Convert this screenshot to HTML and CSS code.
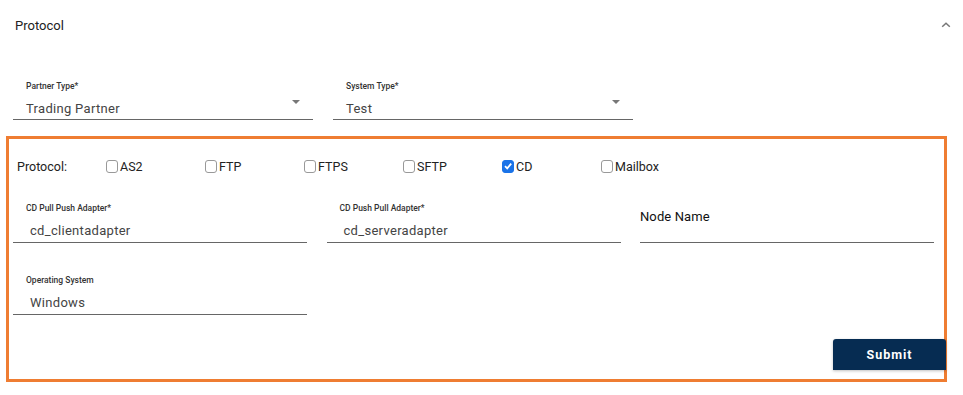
FILE: index.html
```html
<!DOCTYPE html>
<html>
<head>
<meta charset="utf-8">
<link rel="stylesheet" href="styles.css">
</head>
<body>
<div class="page">
  <div class="header">
    <span class="title">Protocol</span>
    <svg class="chevron" width="10" height="7" viewBox="0 0 10 7"><path d="M1.2 5.8 L5 2.2 L8.8 5.8" fill="none" stroke="#777" stroke-width="1.5"/></svg>
  </div>
  <div class="top-row">
    <div class="field select">
      <div class="label">Partner Type*</div>
      <div class="value">Trading Partner</div>
      <span class="caret"></span>
    </div>
    <div class="field select">
      <div class="label">System Type*</div>
      <div class="value">Test</div>
      <span class="caret"></span>
    </div>
  </div>
  <div class="box">
    <div class="proto-row">
      <span class="proto-label">Protocol:</span>
      <label class="cb"><span class="check"></span>AS2</label>
      <label class="cb"><span class="check"></span>FTP</label>
      <label class="cb"><span class="check"></span>FTPS</label>
      <label class="cb"><span class="check"></span>SFTP</label>
      <label class="cb"><span class="check on"><svg width="10" height="10" viewBox="0 0 10 10"><path d="M2 5.2 L4.2 7.4 L8.2 2.6" fill="none" stroke="#fff" stroke-width="1.8"/></svg></span>CD</label>
      <label class="cb"><span class="check"></span>Mailbox</label>
    </div>
    <div class="grid">
      <div class="field inbox">
        <div class="label">CD Pull Push Adapter*</div>
        <div class="value">cd_clientadapter</div>
      </div>
      <div class="field inbox">
        <div class="label">CD Push Pull Adapter*</div>
        <div class="value">cd_serveradapter</div>
      </div>
      <div class="field node">
        <div class="node-label">Node Name</div>
      </div>
      <div class="field inbox os">
        <div class="label">Operating System</div>
        <div class="value">Windows</div>
      </div>
    </div>
    <div class="actions">
      <button class="submit">Submit</button>
    </div>
  </div>
</div>
</body>
</html>
```
FILE: styles.css
```css
* { box-sizing: border-box; }
body {
  margin: 0;
  font-family: Roboto, "Liberation Sans", sans-serif;
  background: #fff;
  color: #222;
}
.page { width: 963px; }
.header {
  display: flex;
  justify-content: space-between;
  align-items: center;
  padding: 17px 12px 0 15px;
  height: 35px;
}
.title { font-size: 13px; line-height: 18px; color: #222; }
.chevron { margin-top: -3px; }
.top-row {
  display: flex;
  gap: 20px;
  margin: 45px 0 0 13px;
}
.field {
  width: 300px;
  border-bottom: 1px solid #666;
  position: relative;
}
.field.select { padding: 0 13px 1px; }
.label {
  font-size: 8.5px;
  line-height: 12px;
  font-weight: 500;
  color: #333;
}
.value {
  font-size: 13px;
  line-height: 18px;
  color: #444;
  margin-top: 8px;
  letter-spacing: 0.3px;
}
.caret {
  position: absolute;
  right: 13px;
  top: 20px;
  width: 0;
  height: 0;
  border-left: 4px solid transparent;
  border-right: 4px solid transparent;
  border-top: 4px solid #777;
}
.box {
  margin: 16px 0 0 6px;
  width: 941px;
  height: 246px;
  border: 3px solid #ef7d32;
  padding: 18px 0 0 8px;
}
.proto-row {
  display: flex;
  align-items: center;
  height: 18px;
  font-size: 12.5px;
  color: #222;
}
.proto-label { width: 89px; font-size: 12.5px; }
.cb {
  width: 99px;
  display: flex;
  align-items: center;
  gap: 2px;
}
.check {
  width: 12px;
  height: 13px;
  border: 1px solid #999;
  border-radius: 3px;
  display: inline-flex;
  align-items: center;
  justify-content: center;
  background: #fff;
}
.check.on { background: #1a73e8; border-color: #1a73e8; }
.grid {
  display: grid;
  grid-template-columns: 294px 294px 294px;
  column-gap: 19.5px;
  margin: 27px 0 0 -4px;
}
.grid .field { width: 294px; }
.field.inbox { padding: 0 13px 2px; }
.field.inbox .value { padding-left: 4px; }
.field.node { padding-top: 6px; }
.node-label {
  font-size: 13px;
  line-height: 18px;
  font-weight: 400;
  color: #111;
  letter-spacing: 0.1px;
}
.field.os { margin-top: 31px; }
.actions {
  display: flex;
  justify-content: flex-end;
  margin: 24px -2px 0 0;
}
.submit {
  width: 113px;
  height: 31px;
  background: #062c52;
  color: #fff;
  border: none;
  border-radius: 3px 3px 0 0;
  font-family: Roboto, "Liberation Sans", sans-serif;
  font-size: 12.5px;
  font-weight: 700;
  letter-spacing: 1px;
  box-shadow: 0 1px 3px rgba(0,0,0,0.25);
}
```
